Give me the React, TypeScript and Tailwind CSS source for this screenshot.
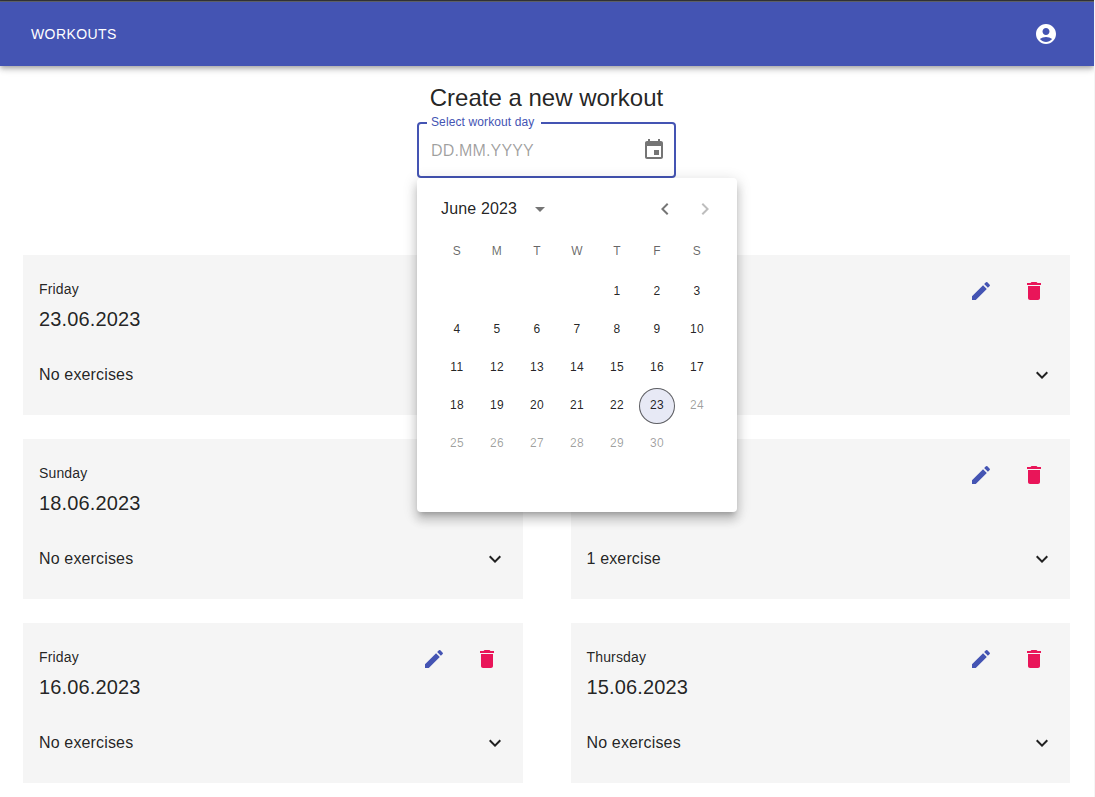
import type { ReactNode } from "react";

type Workout = { id: number; day?: string; date?: string; summary?: string };

const workouts: Workout[] = [
  { id: 1, day: "Friday", date: "23.06.2023", summary: "No exercises" },
  { id: 2 },
  { id: 3, day: "Sunday", date: "18.06.2023", summary: "No exercises" },
  { id: 4, summary: "1 exercise" },
  { id: 5, day: "Friday", date: "16.06.2023", summary: "No exercises" },
  { id: 6, day: "Thursday", date: "15.06.2023", summary: "No exercises" },
];

const paths = {
  account:
    "M12 2C6.48 2 2 6.48 2 12s4.48 10 10 10 10-4.48 10-10S17.52 2 12 2zm0 4c1.93 0 3.5 1.57 3.5 3.5S13.93 13 12 13s-3.5-1.57-3.5-3.5S10.07 6 12 6zm0 14c-2.03 0-4.43-.82-6.14-2.88C7.55 15.8 9.68 15 12 15s4.45.8 6.14 2.12C16.43 19.18 14.03 20 12 20z",
  calendar:
    "M17 12h-5v5h5v-5zM16 1v2H8V1H6v2H5c-1.11 0-1.99.9-1.99 2L3 19c0 1.1.89 2 2 2h14c1.1 0 2-.9 2-2V5c0-1.1-.9-2-2-2h-1V1h-2zm3 18H5V8h14v11z",
  dropDown: "M7 10l5 5 5-5z",
  left: "M15.41 16.59L10.83 12l4.58-4.59L14 6l-6 6 6 6 1.41-1.41z",
  right: "M8.59 16.59L13.17 12 8.59 7.41 10 6l6 6-6 6-1.41-1.41z",
  expand: "M16.59 8.59L12 13.17 7.41 8.59 6 10l6 6 6-6z",
  edit: "M3 17.25V21h3.75L17.81 9.94l-3.75-3.75L3 17.25zM20.71 7.04c.39-.39.39-1.02 0-1.41l-2.34-2.34a.9959.9959 0 0 0-1.41 0l-1.83 1.83 3.75 3.75 1.83-1.83z",
  trash: "M6 19c0 1.1.9 2 2 2h8c1.1 0 2-.9 2-2V7H6v12zM19 4h-3.5l-1-1h-5l-1 1H5v2h14V4z",
};

function Icon({ name, className = "" }: { name: keyof typeof paths; className?: string }) {
  return (
    <svg viewBox="0 0 24 24" className={`block size-6 shrink-0 fill-current ${className}`} aria-hidden="true">
      <path d={paths[name]} />
    </svg>
  );
}

function IconButton({ label, children }: { label: string; children: ReactNode }) {
  return (
    <button type="button" aria-label={label} className="flex size-10 items-center justify-center rounded-full">
      {children}
    </button>
  );
}

function WorkoutCard({ day, date, summary }: Workout) {
  return (
    <article className="flex h-40 flex-col bg-[#f5f5f5] text-black/87">
      <div className="flex h-[88px] justify-between px-4 pt-4">
        <div className="pt-2">
          {day && <p className="text-sm leading-5 tracking-[0.01071em]">{day}</p>}
          {date && <h2 className="mt-1 text-xl leading-8 tracking-[0.0075em]">{date}</h2>}
        </div>
        <div className="flex gap-[13px]">
          <IconButton label="Edit workout">
            <Icon name="edit" className="text-[#4454b3]" />
          </IconButton>
          <IconButton label="Delete workout">
            <Icon name="trash" className="text-[#e91559]" />
          </IconButton>
        </div>
      </div>
      <div className="flex h-16 items-center justify-between px-4">
        <span className="leading-6 tracking-[0.00938em]">{summary}</span>
        <Icon name="expand" />
      </div>
    </article>
  );
}

const weekdays = ["S", "M", "T", "W", "T", "F", "S"];
const today = 23;

function Day({ day }: { day: number }) {
  const tone =
    day === today
      ? "border border-black/60 bg-[#e7e9f5] text-black/87"
      : day > today
        ? "text-black/38"
        : "text-black/87";
  return (
    <button
      type="button"
      className={`mx-auto flex size-9 items-center justify-center rounded-full pb-0.5 text-xs tracking-[0.03333em] ${tone}`}
    >
      {day}
    </button>
  );
}

function CalendarPopup() {
  return (
    <div className="absolute top-full left-0 z-10 h-[334px] w-80 rounded bg-white shadow-[0_5px_5px_-3px_rgba(0,0,0,0.2),0_8px_10px_1px_rgba(0,0,0,0.14),0_3px_14px_2px_rgba(0,0,0,0.12)]">
      <div className="flex h-[62px] items-center pr-3 pl-6">
        <span className="tracking-[0.00938em] text-black/87">June 2023</span>
        <Icon name="dropDown" className="ml-[11px] text-black/54" />
        <div className="ml-auto flex">
          <IconButton label="Previous month">
            <Icon name="left" className="text-black/54" />
          </IconButton>
          <IconButton label="Next month">
            <Icon name="right" className="text-black/26" />
          </IconButton>
        </div>
      </div>
      <div className="mx-5 grid h-[30px] grid-cols-7 justify-items-center pt-[3px] text-xs leading-4 tracking-[0.03333em] text-black/60">
        {weekdays.map((name, index) => (
          <span key={index}>{name}</span>
        ))}
      </div>
      <div className="mx-5 grid grid-cols-7 gap-y-0.5 pt-1">
        <span className="col-span-4" />
        {Array.from({ length: 30 }, (_, index) => (
          <Day key={index} day={index + 1} />
        ))}
      </div>
    </div>
  );
}

function DateField() {
  return (
    <div className="relative h-14 w-[259px]">
      <fieldset className="-mt-[5px] h-[61px] rounded border-2 border-[#4454b3] px-2">
        <legend className="h-[12px] pr-[7px] pl-1 text-xs leading-[11px] tracking-[0.00938em] text-[#4454b3]">
          Select workout day
        </legend>
        <div className="flex h-[43px] w-full items-center justify-between pl-1">
          <span className="text-base tracking-[0.00938em] text-black/38">DD.MM.YYYY</span>
          <Icon name="calendar" className="mb-0.5 text-black/54" />
        </div>
      </fieldset>
      <CalendarPopup />
    </div>
  );
}

export default function App() {
  return (
    <div className="h-[797px] overflow-hidden border-r border-[#f5f5f5] bg-white font-['Liberation_Sans',Arial,sans-serif]">
      <div className="h-px bg-[#35363a]" />
      <header className="flex h-[65px] items-center justify-between border-t border-[#5c5f66] bg-[#4454b3] pr-9 pl-[31px] text-white shadow-[0_2px_4px_-1px_rgba(0,0,0,0.2),0_4px_5px_0_rgba(0,0,0,0.14),0_1px_10px_0_rgba(0,0,0,0.12)]">
        <a className="text-sm tracking-[0.02857em]">WORKOUTS</a>
        <Icon name="account" />
      </header>
      <section className="flex h-[189px] flex-col items-center pt-4 pr-px">
        <h1 className="h-10 text-2xl leading-8 text-black/87">Create a new workout</h1>
        <DateField />
      </section>
      <main className="grid grid-cols-2 gap-x-12 gap-y-6 pr-6 pl-[23px]">
        {workouts.map((workout) => (
          <WorkoutCard key={workout.id} {...workout} />
        ))}
      </main>
    </div>
  );
}
